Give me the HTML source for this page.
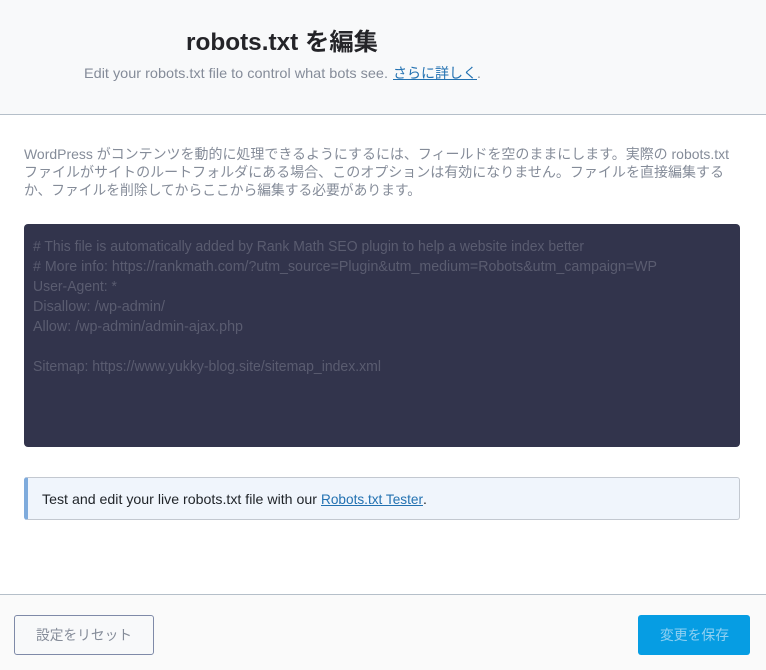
<!DOCTYPE html>
<html lang="ja">
<head>
<meta charset="utf-8">
<title>robots.txt を編集</title>
<style>
html,body{margin:0;padding:0;background:#fff;width:766px;height:670px;overflow:hidden}
svg{display:block;position:absolute;left:0;top:0}
text{font-family:"Liberation Sans","Noto Sans CJK JP",sans-serif;white-space:pre}
.box{position:absolute;box-sizing:border-box}
</style>
</head>
<body>
<div class="box" style="left:0;top:0;width:766px;height:115px;background:#f8f9fa;border-bottom:1px solid #b5bfc9"></div>
<div class="box" style="left:24px;top:224px;width:716px;height:223px;background:#32344c;border-radius:4px"></div>
<div class="box" style="left:24px;top:477px;width:716px;height:43px;background:#f0f5fc;border:1px solid #c3c8d0;border-left:4px solid #7fabdc;border-radius:3px"></div>
<div class="box" style="left:0;top:594px;width:766px;height:76px;background:#fafafa;border-top:1px solid #b5bfc9"></div>
<div class="box" style="left:14px;top:615px;width:140px;height:40px;background:#f8f9fa;border:1px solid #7f8aa8;border-radius:3px"></div>
<div class="box" style="left:638px;top:615px;width:112px;height:40px;background:#069de3;border-radius:3px"></div>
<svg width="766" height="670" viewBox="0 0 766 670" xmlns="http://www.w3.org/2000/svg">
<text x="186" y="50" font-size="24" font-weight="700" fill="#242428" textLength="192" lengthAdjust="spacingAndGlyphs">robots.txt を編集</text>
<text x="84" y="78" font-size="14" fill="#858c99" textLength="304" lengthAdjust="spacingAndGlyphs">Edit your robots.txt file to control what bots see.</text>
<text x="393" y="78" font-size="14" fill="#2271b1" textLength="84" lengthAdjust="spacingAndGlyphs">さらに詳しく</text>
<rect x="393" y="79" width="84" height="1" fill="#2271b1"/>
<text x="477" y="78" font-size="14" fill="#858c99">.</text>
<text x="24" y="159" font-size="14" fill="#858c99" textLength="705" lengthAdjust="spacingAndGlyphs">WordPress がコンテンツを動的に処理できるようにするには、フィールドを空のままにします。実際の robots.txt</text>
<text x="24" y="177" font-size="14" fill="#858c99" textLength="700" lengthAdjust="spacingAndGlyphs">ファイルがサイトのルートフォルダにある場合、このオプションは有効になりません。ファイルを直接編集する</text>
<text x="24" y="195" font-size="14" fill="#858c99" textLength="397" lengthAdjust="spacingAndGlyphs">か、ファイルを削除してからここから編集する必要があります。</text>
<g font-size="14.5" fill="#5a5c70">
<text x="33" y="251" textLength="551" lengthAdjust="spacingAndGlyphs"># This file is automatically added by Rank Math SEO plugin to help a website index better</text>
<text x="33" y="271" textLength="624" lengthAdjust="spacingAndGlyphs"># More info: https://rankmath.com/?utm_source=Plugin&amp;utm_medium=Robots&amp;utm_campaign=WP</text>
<text x="33" y="291" textLength="84" lengthAdjust="spacingAndGlyphs">User-Agent: *</text>
<text x="33" y="311" textLength="132" lengthAdjust="spacingAndGlyphs">Disallow: /wp-admin/</text>
<text x="33" y="331" textLength="210" lengthAdjust="spacingAndGlyphs">Allow: /wp-admin/admin-ajax.php</text>
<text x="33" y="371" textLength="348" lengthAdjust="spacingAndGlyphs">Sitemap: https://www.yukky-blog.site/sitemap_index.xml</text>
</g>
<text x="42" y="504" font-size="14" fill="#1f2328" textLength="275" lengthAdjust="spacingAndGlyphs">Test and edit your live robots.txt file with our</text>
<text x="321" y="504" font-size="14" fill="#2271b1" textLength="102" lengthAdjust="spacingAndGlyphs">Robots.txt Tester</text>
<rect x="321" y="505" width="102" height="1" fill="#2271b1"/>
<text x="423" y="504" font-size="14" fill="#1f2328">.</text>
<text x="36" y="640" font-size="14" fill="#858c99" textLength="96" lengthAdjust="spacingAndGlyphs">設定をリセット</text>
<text x="660" y="640" font-size="14" fill="#8fd0f2" textLength="69" lengthAdjust="spacingAndGlyphs">変更を保存</text>
</svg>
</body>
</html>
